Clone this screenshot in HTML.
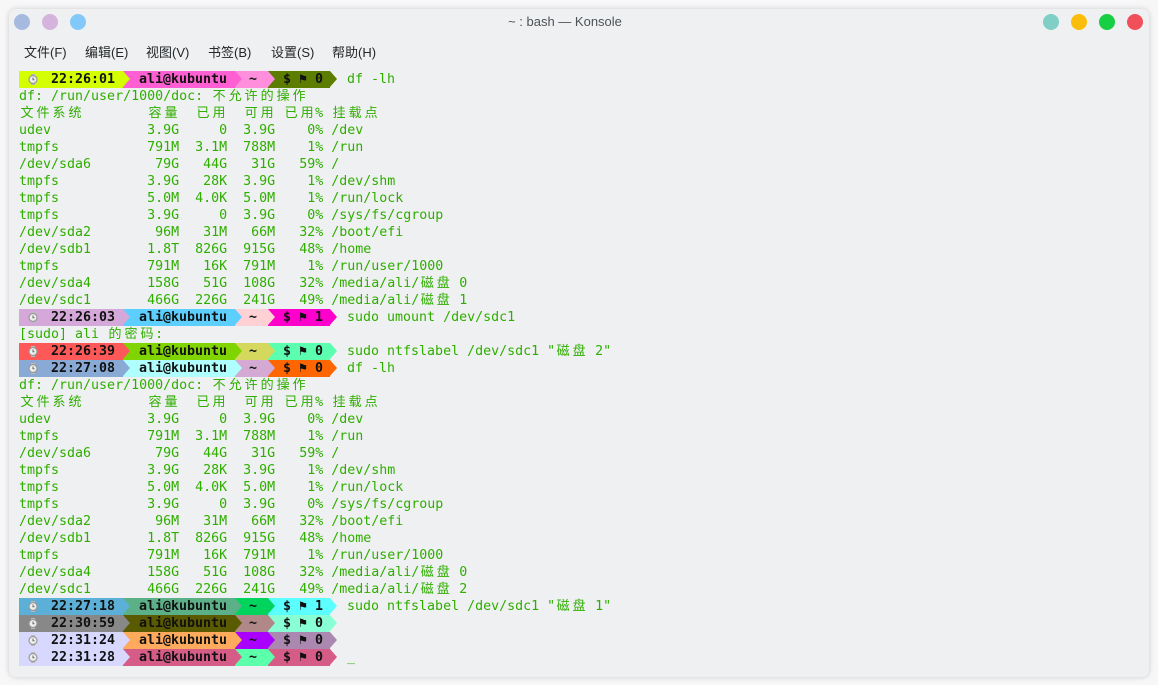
<!DOCTYPE html>
<html><head><meta charset="utf-8"><style>
html,body{margin:0;padding:0;width:1158px;height:685px;background:#f7f7f8;overflow:hidden}
.win{position:absolute;left:9px;top:9px;width:1140px;height:668px;background:#eff0f1;border-radius:7px;box-shadow:0 0 6px rgba(0,0,0,.18)}
.dot{position:absolute;width:16px;height:16px;border-radius:50%;top:5px}
.title{position:absolute;left:0;width:1112px;top:5px;text-align:center;font:13px "Liberation Sans","DejaVu Sans",sans-serif;color:#4d5257}
.menu{position:absolute;top:33px;font:13px "Liberation Sans","Noto Sans CJK SC",sans-serif;color:#232629}
.term{position:absolute;left:19px;top:71px;font:13.3px "DejaVu Sans Mono","Liberation Mono",monospace;color:#2fae00}
.l{height:17px;line-height:17px;white-space:pre;position:relative;overflow:visible}
i{font-style:normal;display:inline-block;width:16px;text-align:center;font-family:"Noto Sans CJK SC",sans-serif;font-size:13px;line-height:1;vertical-align:baseline}
.p{position:relative;height:17px;line-height:17px}
.s{position:absolute;top:0;height:17px;font-weight:bold;color:#111;white-space:pre}
.s:after{content:"";position:absolute;right:-7px;top:0;border-left:7px solid var(--c);border-top:8.5px solid transparent;border-bottom:8.5px solid transparent;z-index:2}
.s1{left:0;width:104px}.s2{left:104px;width:112px}.s3{left:216px;width:33px}.s4{left:249px;width:62px}
.s1 span{position:absolute;left:32px}.s2 span{position:absolute;left:16px}.s3 span{position:absolute;left:14px}.s4 span{position:absolute;left:15px}
.ck{position:absolute;left:9px;top:3px;width:10px;height:11px}
.cmd{position:absolute;left:328px;white-space:pre}
</style></head><body>
<div class="win">
<div class="dot" style="left:5px;background:#a6badf"></div>
<div class="dot" style="left:33px;background:#d5b3dc"></div>
<div class="dot" style="left:61px;background:#82c9f9"></div>
<div class="title">~ : bash — Konsole</div>
<div class="dot" style="left:1034px;background:#7fcfc6"></div>
<div class="dot" style="left:1062px;background:#fbbd0b"></div>
<div class="dot" style="left:1090px;background:#16cf42"></div>
<div class="dot" style="left:1118px;background:#f1505a"></div>
<div class="menu" style="left:15px">文件(F)</div>
<div class="menu" style="left:76px">编辑(E)</div>
<div class="menu" style="left:137px">视图(V)</div>
<div class="menu" style="left:199px">书签(B)</div>
<div class="menu" style="left:262px">设置(S)</div>
<div class="menu" style="left:323px">帮助(H)</div>
</div>
<svg width="0" height="0" style="position:absolute"><defs><g id="clk"><rect x="3" y="0" width="4" height="2" fill="#bbb"/><rect x="3" y="9" width="4" height="2" fill="#bbb"/><circle cx="5" cy="5.5" r="4" fill="#eee" stroke="#999" stroke-width="1.2"/><path d="M5 3.5V5.7H6.5" stroke="#666" fill="none" stroke-width="1"/></g></defs></svg>
<div class="term">
<div class="p"><div class="s s1" style="background:#d4ff00;--c:#d4ff00"><svg class="ck"><use href="#clk"/></svg><span>22:26:01</span></div><div class="s s2" style="background:#ff5fd2;--c:#ff5fd2"><span>ali@kubuntu</span></div><div class="s s3" style="background:#ff8fdc;--c:#ff8fdc"><span>~</span></div><div class="s s4" style="background:#5c7d00;--c:#5c7d00"><span>$ ⚑ 0</span></div><span class="cmd">df -lh</span></div>
<div class="l">df: /run/user/1000/doc: <i>不</i><i>允</i><i>许</i><i>的</i><i>操</i><i>作</i></div>
<div class="l"><i>文</i><i>件</i><i>系</i><i>统</i>        <i>容</i><i>量</i>  <i>已</i><i>用</i>  <i>可</i><i>用</i> <i>已</i><i>用</i>% <i>挂</i><i>载</i><i>点</i></div>
<div class="l">udev            3.9G     0  3.9G    0% /dev</div>
<div class="l">tmpfs           791M  3.1M  788M    1% /run</div>
<div class="l">/dev/sda6        79G   44G   31G   59% /</div>
<div class="l">tmpfs           3.9G   28K  3.9G    1% /dev/shm</div>
<div class="l">tmpfs           5.0M  4.0K  5.0M    1% /run/lock</div>
<div class="l">tmpfs           3.9G     0  3.9G    0% /sys/fs/cgroup</div>
<div class="l">/dev/sda2        96M   31M   66M   32% /boot/efi</div>
<div class="l">/dev/sdb1       1.8T  826G  915G   48% /home</div>
<div class="l">tmpfs           791M   16K  791M    1% /run/user/1000</div>
<div class="l">/dev/sda4       158G   51G  108G   32% /media/ali/<i>磁</i><i>盘</i> 0</div>
<div class="l">/dev/sdc1       466G  226G  241G   49% /media/ali/<i>磁</i><i>盘</i> 1</div>
<div class="p"><div class="s s1" style="background:#d4a8d8;--c:#d4a8d8"><svg class="ck"><use href="#clk"/></svg><span>22:26:03</span></div><div class="s s2" style="background:#5ccfff;--c:#5ccfff"><span>ali@kubuntu</span></div><div class="s s3" style="background:#ffd0d4;--c:#ffd0d4"><span>~</span></div><div class="s s4" style="background:#ff00cc;--c:#ff00cc"><span>$ ⚑ 1</span></div><span class="cmd">sudo umount /dev/sdc1</span></div>
<div class="l">[sudo] ali <i>的</i><i>密</i><i>码</i>:</div>
<div class="p"><div class="s s1" style="background:#ff5858;--c:#ff5858"><svg class="ck"><use href="#clk"/></svg><span>22:26:39</span></div><div class="s s2" style="background:#80d400;--c:#80d400"><span>ali@kubuntu</span></div><div class="s s3" style="background:#d4d85c;--c:#d4d85c"><span>~</span></div><div class="s s4" style="background:#5cffb0;--c:#5cffb0"><span>$ ⚑ 0</span></div><span class="cmd">sudo ntfslabel /dev/sdc1 "<i>磁</i><i>盘</i> 2"</span></div>
<div class="p"><div class="s s1" style="background:#88aad4;--c:#88aad4"><svg class="ck"><use href="#clk"/></svg><span>22:27:08</span></div><div class="s s2" style="background:#b0ffff;--c:#b0ffff"><span>ali@kubuntu</span></div><div class="s s3" style="background:#d4aad4;--c:#d4aad4"><span>~</span></div><div class="s s4" style="background:#ff6600;--c:#ff6600"><span>$ ⚑ 0</span></div><span class="cmd">df -lh</span></div>
<div class="l">df: /run/user/1000/doc: <i>不</i><i>允</i><i>许</i><i>的</i><i>操</i><i>作</i></div>
<div class="l"><i>文</i><i>件</i><i>系</i><i>统</i>        <i>容</i><i>量</i>  <i>已</i><i>用</i>  <i>可</i><i>用</i> <i>已</i><i>用</i>% <i>挂</i><i>载</i><i>点</i></div>
<div class="l">udev            3.9G     0  3.9G    0% /dev</div>
<div class="l">tmpfs           791M  3.1M  788M    1% /run</div>
<div class="l">/dev/sda6        79G   44G   31G   59% /</div>
<div class="l">tmpfs           3.9G   28K  3.9G    1% /dev/shm</div>
<div class="l">tmpfs           5.0M  4.0K  5.0M    1% /run/lock</div>
<div class="l">tmpfs           3.9G     0  3.9G    0% /sys/fs/cgroup</div>
<div class="l">/dev/sda2        96M   31M   66M   32% /boot/efi</div>
<div class="l">/dev/sdb1       1.8T  826G  915G   48% /home</div>
<div class="l">tmpfs           791M   16K  791M    1% /run/user/1000</div>
<div class="l">/dev/sda4       158G   51G  108G   32% /media/ali/<i>磁</i><i>盘</i> 0</div>
<div class="l">/dev/sdc1       466G  226G  241G   49% /media/ali/<i>磁</i><i>盘</i> 2</div>
<div class="p"><div class="s s1" style="background:#5cb0d8;--c:#5cb0d8"><svg class="ck"><use href="#clk"/></svg><span>22:27:18</span></div><div class="s s2" style="background:#5cb088;--c:#5cb088"><span>ali@kubuntu</span></div><div class="s s3" style="background:#00d45c;--c:#00d45c"><span>~</span></div><div class="s s4" style="background:#5cffff;--c:#5cffff"><span>$ ⚑ 1</span></div><span class="cmd">sudo ntfslabel /dev/sdc1 "<i>磁</i><i>盘</i> 1"</span></div>
<div class="p"><div class="s s1" style="background:#888888;--c:#888888"><svg class="ck"><use href="#clk"/></svg><span>22:30:59</span></div><div class="s s2" style="background:#5a5a00;--c:#5a5a00"><span>ali@kubuntu</span></div><div class="s s3" style="background:#b08888;--c:#b08888"><span>~</span></div><div class="s s4" style="background:#88ffd4;--c:#88ffd4"><span>$ ⚑ 0</span></div></div>
<div class="p"><div class="s s1" style="background:#d8d8ff;--c:#d8d8ff"><svg class="ck"><use href="#clk"/></svg><span>22:31:24</span></div><div class="s s2" style="background:#ffaa5c;--c:#ffaa5c"><span>ali@kubuntu</span></div><div class="s s3" style="background:#aa00ff;--c:#aa00ff"><span>~</span></div><div class="s s4" style="background:#aa88b0;--c:#aa88b0"><span>$ ⚑ 0</span></div></div>
<div class="p"><div class="s s1" style="background:#d8d8ff;--c:#d8d8ff"><svg class="ck"><use href="#clk"/></svg><span>22:31:28</span></div><div class="s s2" style="background:#d65c88;--c:#d65c88"><span>ali@kubuntu</span></div><div class="s s3" style="background:#5cffaa;--c:#5cffaa"><span>~</span></div><div class="s s4" style="background:#d65c88;--c:#d65c88"><span>$ ⚑ 0</span></div><span class="cmd">_</span></div>
</div>
</body></html>
